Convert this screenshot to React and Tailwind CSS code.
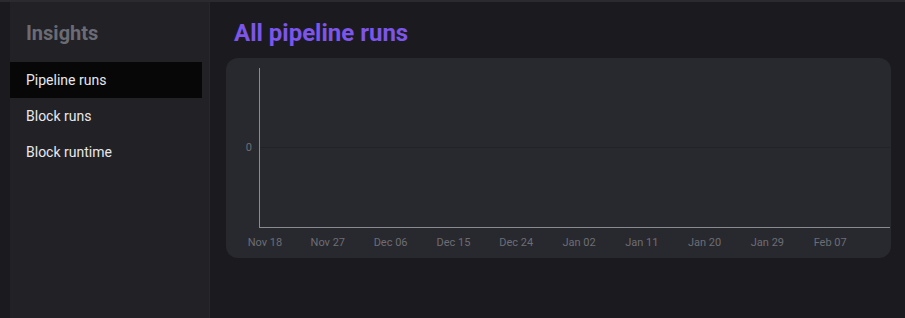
import React from "react";

const navItems = ["Pipeline runs", "Block runs", "Block runtime"];

const xLabels = [
  "Nov 18",
  "Nov 27",
  "Dec 06",
  "Dec 15",
  "Dec 24",
  "Jan 02",
  "Jan 11",
  "Jan 20",
  "Jan 29",
  "Feb 07",
];

export default function App() {
  return (
    <div
      className="w-[905px] h-[318px] bg-[#1b1b1f] border-t-2 border-[#2a2a2f] flex overflow-hidden"
      style={{ fontFamily: "Roboto, 'Liberation Sans', sans-serif" }}
    >
      {/* Sidebar */}
      <aside className="ml-[10px] w-[200px] h-full bg-[#212126] border-r border-[#26262b]">
        <h2 className="pl-4 pt-[19px] text-[20px] font-bold text-[#6b6b74] leading-6">
          Insights
        </h2>
        <nav className="mt-[17px] pr-[7px]">
          {navItems.map((item, index) => (
            <div
              key={item}
              className={`h-9 flex items-center pl-4 text-[14px] text-[#e8e8ec] ${
                index === 0 ? "bg-[#070708]" : ""
              }`}
            >
              {item}
            </div>
          ))}
        </nav>
      </aside>

      {/* Main */}
      <main className="flex-1 pl-4 pr-[14px]">
        <h1 className="pl-[8px] pt-[17px] text-[24px] font-bold text-[#7c55ea] leading-7">
          All pipeline runs
        </h1>
        <div className="mt-[11px] h-[200px] rounded-xl bg-[#28292e] relative">
          <svg width="664" height="200" className="absolute inset-0">
            <line x1="34" y1="89.5" x2="664" y2="89.5" stroke="#222328" strokeWidth="1" />
            <line x1="33.5" y1="10" x2="33.5" y2="169" stroke="#8a8a90" strokeWidth="1" />
            <line x1="33" y1="169.5" x2="664" y2="169.5" stroke="#8a8a90" strokeWidth="1" />
            <text
              x="26"
              y="93"
              textAnchor="end"
              fill="#6d6d75"
              fontSize="11"
              fontFamily="Roboto, 'Liberation Sans', sans-serif"
            >
              0
            </text>
            {xLabels.map((label, i) => (
              <text
                key={label}
                x={39 + i * 62.8}
                y="188"
                textAnchor="middle"
                fill="#6d6d75"
                fontSize="11"
                fontFamily="Roboto, 'Liberation Sans', sans-serif"
              >
                {label}
              </text>
            ))}
          </svg>
        </div>
      </main>
    </div>
  );
}
